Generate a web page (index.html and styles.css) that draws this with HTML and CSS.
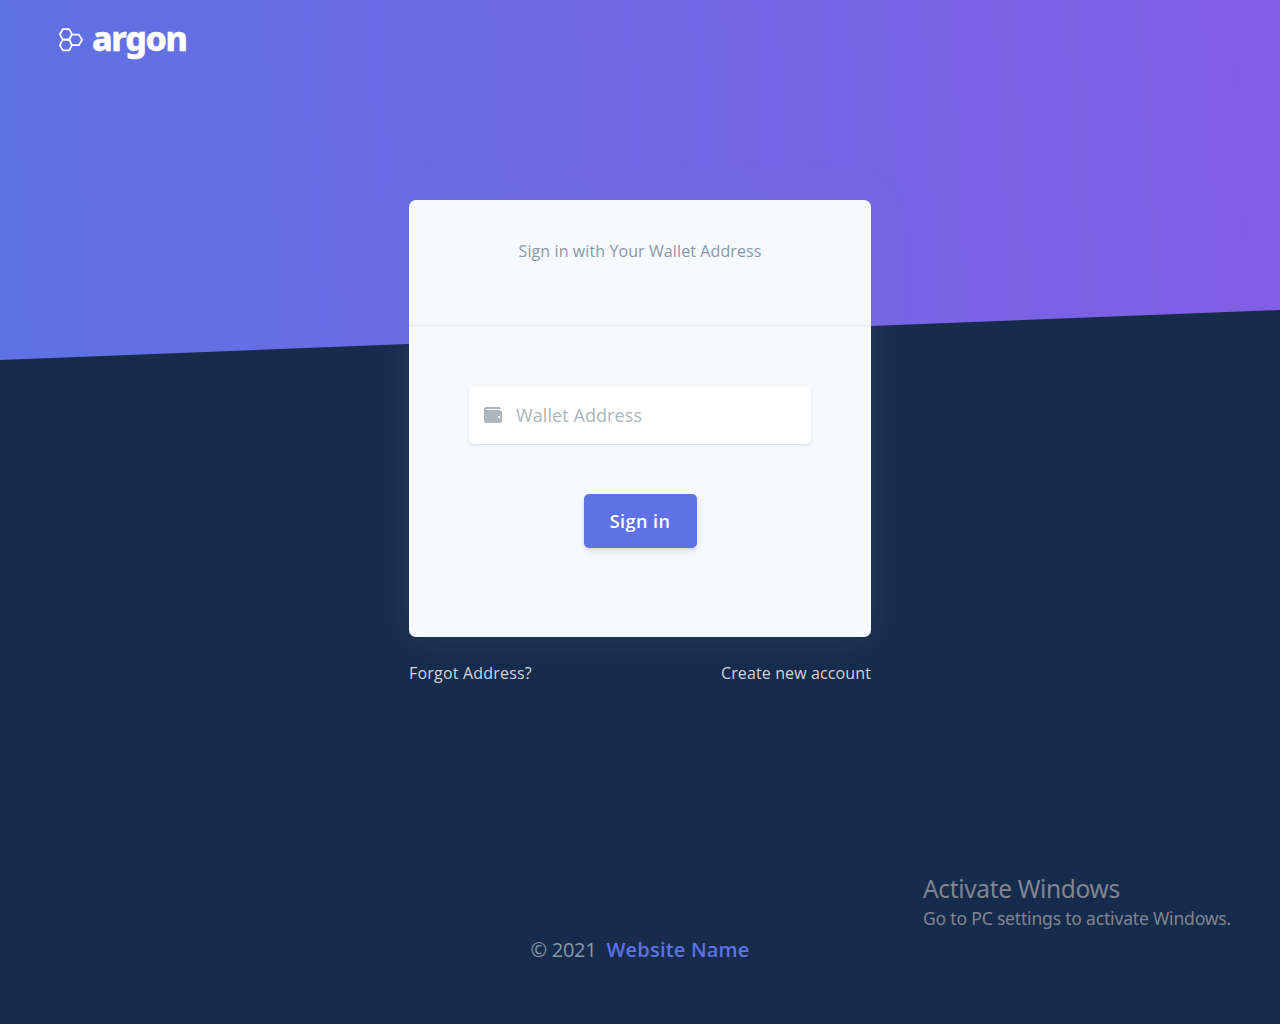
FILE: index.html
```html
<!DOCTYPE html>
<html lang="en">
<head>
<meta charset="utf-8">
<title>Sign in</title>
<link rel="stylesheet" href="styles.css">
</head>
<body>
<div class="page">
  <div class="backdrop"></div>
  <header class="navbar">
    <a class="brand">
      <svg class="brand-mark" viewBox="0 0 26 26" width="26" height="26" fill="none" stroke="#fff" stroke-width="1.7" stroke-linejoin="round">
        <path d="M4.8 2.2h6.4L14 7.2l-2.8 5.4H4.8L1.9 7.2z"/>
        <path d="M4.8 12.6h6.4l2.8 5.6-2.8 5.2H4.8l-2.9-5.2z"/>
        <path d="M14 7.6h6.9l3.2 5.3-3.2 5.3H14l-2.8-5.6z"/>
      </svg>
      <span class="brand-name">argon</span>
    </a>
  </header>
  <main class="login">
    <section class="card">
      <div class="card-header">Sign in with Your Wallet Address</div>
      <form class="card-body">
        <label class="field">
          <svg class="wallet" width="18" height="16" viewBox="0 0 18 16">
            <path fill="#adb5bd" fill-rule="evenodd" d="M1 0h15v1h1v1H2v1h14v1h2v11h-1v1H1v-1H0V1h1zM14 9v2h2V9z"/>
          </svg>
          <input class="field-input" type="text" placeholder="Wallet Address">
        </label>
        <button class="submit" type="button">Sign in</button>
      </form>
    </section>
    <nav class="links"><a class="forgot">Forgot Address?</a><a class="create">Create new account</a></nav>
  </main>
  <footer class="footer"><span class="copyright">© 2021</span><a class="site">Website Name</a></footer>
  <aside class="notice">
    <div class="notice-title">Activate Windows</div>
    <div class="notice-text">Go to PC settings to activate Windows.</div>
  </aside>
</div>
</body>
</html>
```
FILE: styles.css
```css
* { box-sizing: border-box; }
body { margin: 0; font-family: "Open Sans", sans-serif; background: #172b4d; }
.page {
  position: relative;
  display: flex;
  flex-direction: column;
  align-items: center;
  height: 1024px;
  overflow: hidden;
}
.backdrop {
  position: absolute;
  inset: 0 0 auto;
  height: 360px;
  background: linear-gradient(87deg, #5e72e4 0%, #825ee4 100%);
  clip-path: polygon(0 0, 100% 0, 100% 310px, 0 360px);
}
.navbar { position: relative; width: 100%; height: 200px; padding: 18px 58px; }
.brand { display: flex; gap: 8px; height: 44px; color: #fff; }
.brand-mark { margin-top: 9px; }
.brand-name {
  font-family: "Noto Sans", sans-serif;
  font-size: 34px;
  line-height: 40px;
  font-weight: 800;
  letter-spacing: -1.4px;
  -webkit-text-stroke: .4px #fff;
}
.login { position: relative; width: 462px; }
.card {
  height: 437px;
  border-radius: 7px;
  background: #f7fafc;
  box-shadow: 0 0 40px rgba(136, 152, 170, .15);
}
.card-header {
  height: 126px;
  border-bottom: 1px solid #e9ecef;
  text-align: center;
  font-size: 16px;
  line-height: 102px;
  letter-spacing: .1px;
  color: #8898aa;
}
.card-body { display: flex; flex-direction: column; align-items: center; padding-top: 60px; }
.field {
  display: flex;
  align-items: center;
  gap: 14px;
  width: 342px;
  height: 58px;
  padding-left: 15px;
  border-radius: 4px;
  background: #fff;
  box-shadow: 0 1px 3px rgba(50, 50, 93, .15), 0 1px 0 rgba(0, 0, 0, .02);
}
.field-input {
  width: 280px;
  padding: 0;
  border: 0;
  outline: 0;
  background: transparent;
  font: 400 18px "Open Sans", sans-serif;
  letter-spacing: .08px;
}
.field-input::placeholder { color: #adb5bd; opacity: 1; }
.submit {
  width: 113px;
  height: 54px;
  margin-top: 50px;
  padding: 0;
  border: 0;
  border-radius: 5px;
  background: #5e72e4;
  box-shadow: 0 4px 6px rgba(50, 50, 93, .11), 0 1px 3px rgba(0, 0, 0, .08);
  color: #fff;
  font: 600 18px "Open Sans", sans-serif;
  letter-spacing: .45px;
}
.links {
  display: flex;
  justify-content: space-between;
  padding-top: 24px;
  font-size: 16px;
  line-height: 24px;
  color: #ced4da;
}
.forgot { letter-spacing: .2px; }
.create { letter-spacing: .12px; }
.footer {
  position: relative;
  display: flex;
  gap: 10px;
  margin-top: 250px;
  font-size: 20px;
  line-height: 30px;
  color: #8898aa;
}
.copyright { letter-spacing: -.25px; }
.site { font-weight: 600; letter-spacing: .2px; color: #5e72e4; }
.notice {
  position: absolute;
  left: 923px;
  top: 873px;
  font-family: "Noto Sans", sans-serif;
  color: #80858f;
  white-space: nowrap;
}
.notice-title { font-size: 24.5px; line-height: 32px; letter-spacing: -.35px; }
.notice-text { font-size: 17.5px; line-height: 27px; letter-spacing: -.18px; }
```
